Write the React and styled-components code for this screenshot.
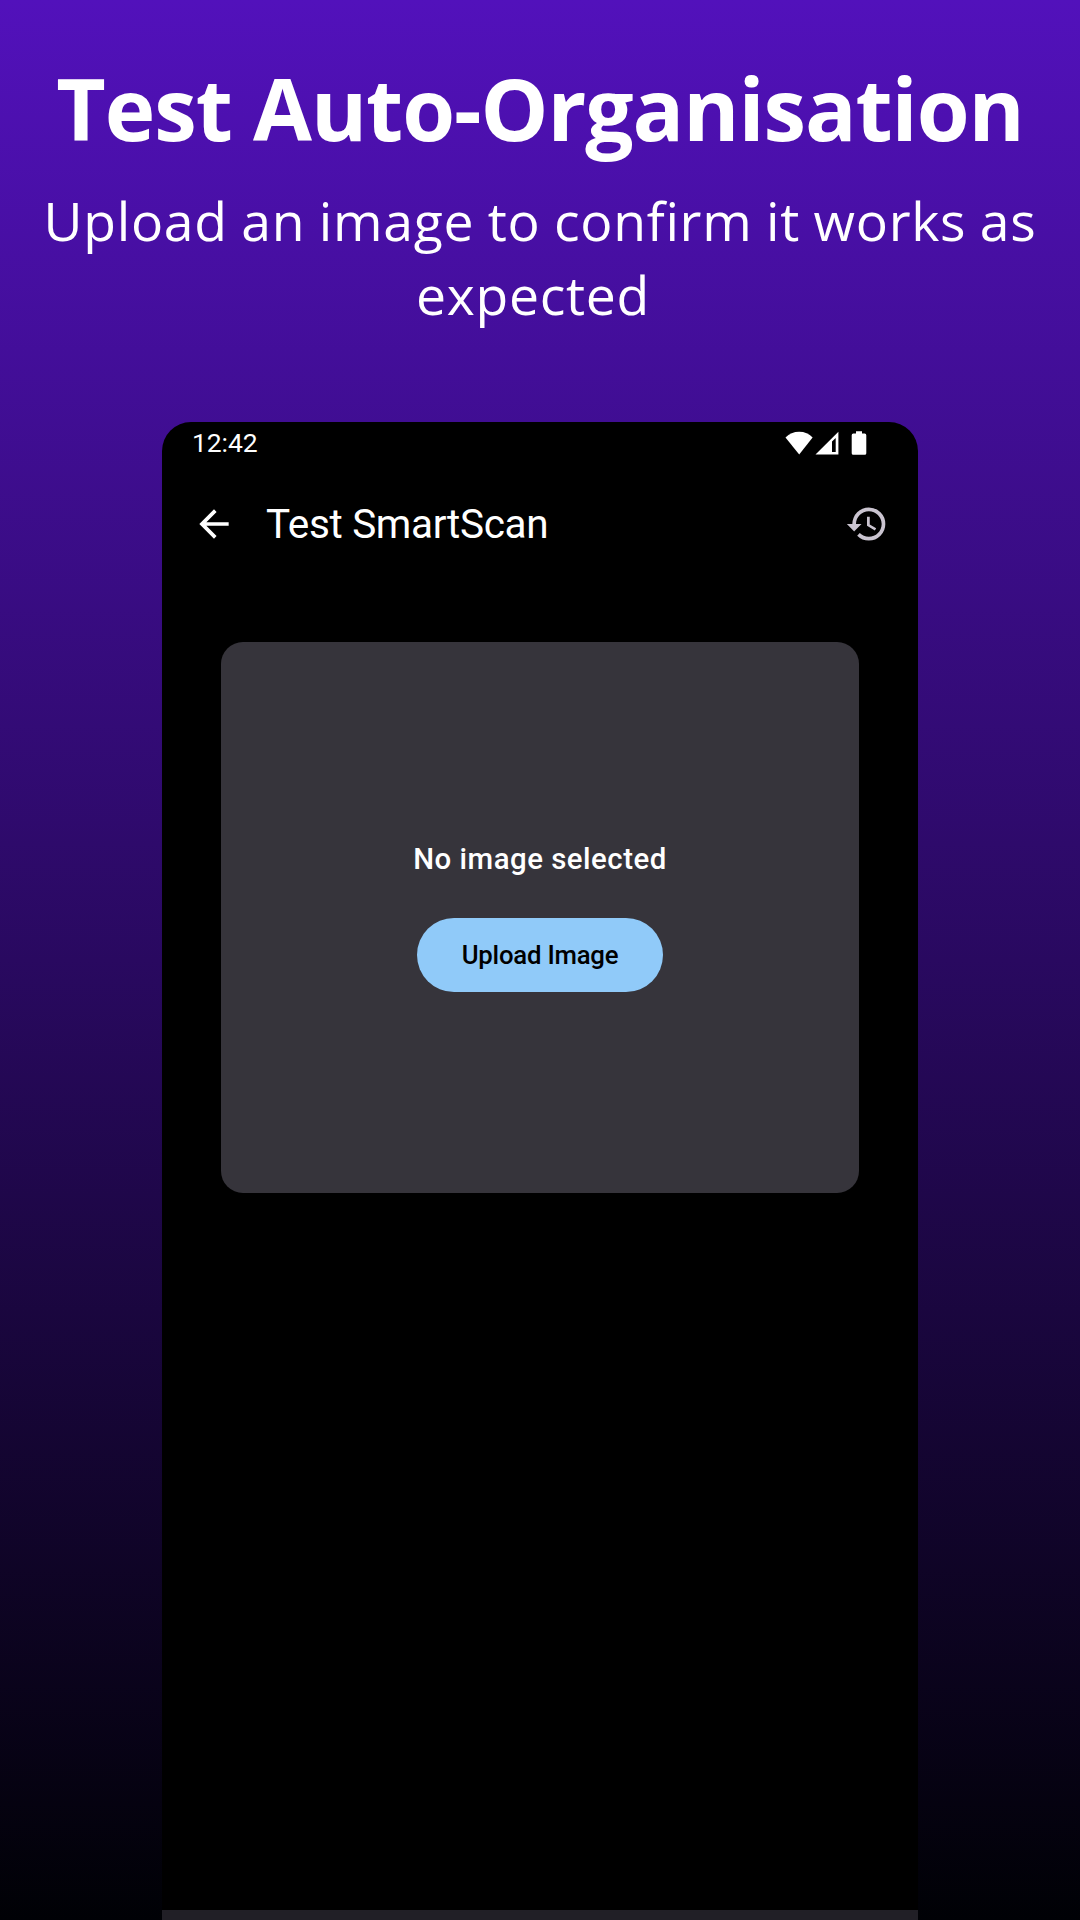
import React from "react";
import styled, { createGlobalStyle } from "styled-components";

const GlobalStyle = createGlobalStyle`
  *, *::before, *::after { box-sizing: border-box; }
  html, body { margin: 0; padding: 0; background: #000; }
`;

const Page = styled.main`
  display: flex;
  flex-direction: column;
  align-items: center;
  width: 1080px;
  height: 1920px;
  overflow: hidden;
  background: linear-gradient(180deg, #5211bb 0%, #000105 100%);
  color: #fff;
`;

const Header = styled.header`
  display: flex;
  flex-direction: column;
  align-items: center;
  width: 100%;
  height: 422px;
  padding-top: 50px;
  flex: none;
  font-family: "Open Sans", "Noto Sans", sans-serif;
  text-align: center;
  white-space: nowrap;
`;

const Headline = styled.h1`
  margin: 0;
  font-size: 85.5px;
  line-height: 116px;
  font-weight: 700;
  letter-spacing: -1.03px;
`;

const Tagline = styled.p`
  margin: 18px 0 0;
  font-size: 53.5px;
  line-height: 74px;
  font-weight: 400;
  letter-spacing: 0.7px;
  word-spacing: -1px;
`;

const TaglineRow = styled.span`
  display: block;
  padding-right: ${(p) => p.$trail || 0}px;
`;

const Phone = styled.section`
  display: flex;
  flex-direction: column;
  width: 756px;
  height: 1498px;
  flex: none;
  background: #000;
  border-radius: 29px 29px 0 0;
  overflow: hidden;
  font-family: Roboto, "Noto Sans", sans-serif;
`;

const StatusBar = styled.div`
  display: flex;
  align-items: center;
  justify-content: space-between;
  height: 42px;
  padding: 0 51px 0 30px;
`;

const Clock = styled.span`
  font-size: 26.5px;
  line-height: 42px;
  letter-spacing: -0.1px;
`;

const StatusIcons = styled.div`
  display: flex;
  align-items: center;
  svg { display: block; }
`;

const Connectivity = styled.div`
  display: flex;
  gap: 2px;
  margin-right: 12px;
`;

const AppBar = styled.div`
  display: flex;
  align-items: center;
  height: 118px;
  padding: 2px 29px 0 30px;
`;

const Title = styled.h2`
  flex: 1;
  margin: 0 0 0 30px;
  font-size: 40.5px;
  line-height: 52px;
  font-weight: 400;
  letter-spacing: -0.35px;
`;

const IconButton = styled.button`
  display: flex;
  padding: 0;
  border: 0;
  background: none;
  color: ${(p) => p.$color};
  svg { display: block; }
`;

const Content = styled.div`
  flex: 1;
  padding: 60px 59px 0;
`;

const Card = styled.div`
  display: flex;
  flex-direction: column;
  align-items: center;
  justify-content: center;
  height: 551px;
  padding-bottom: 6px;
  border-radius: 22px;
  background: #36343b;
`;

const EmptyLabel = styled.p`
  margin: 0;
  font-size: 29.4px;
  line-height: 44px;
  font-weight: 500;
  letter-spacing: 0.5px;
`;

const UploadButton = styled.button`
  width: 246px;
  height: 74px;
  margin-top: 37px;
  padding: 0;
  border: 0;
  border-radius: 37px;
  background: #90caf9;
  color: #000;
  font: 500 25.75px/37px Roboto, "Noto Sans", sans-serif;
  letter-spacing: -0.22px;
`;

const BottomBar = styled.div`
  height: 10px;
  background: #211f26;
`;

const WifiIcon = () => (
  <svg width="28" height="24" viewBox="0 0 28 24" fill="currentColor">
    <path d="M0.500 6.400C4.100 2.600 8.900.7 14.200.7s10 1.900 13.400 5.700L14.200 23.500z" />
  </svg>
);

const SignalIcon = () => (
  <svg width="24" height="24" viewBox="0 0 24 24">
    <path fill="currentColor" fillRule="evenodd" d="M23.400.7V23.600H.5zM20.700 6.900 17 10.500V20.900H20.700z" />
  </svg>
);

const BatteryIcon = () => (
  <svg width="16" height="24" viewBox="0 0 16 24" fill="currentColor">
    <path d="M5 .3h6v2.300h2.700q1.600 0 1.600 1.600v18q0 1.500-1.600 1.500H2.300Q.7 23.700.7 22.200v-18q0-1.600 1.600-1.600H5z" />
  </svg>
);

const BackIcon = () => (
  <svg width="44" height="44" viewBox="0 0 24 24" fill="currentColor">
    <path d="M20 11H7.830l5.590-5.590L12 4l-8 8 8 8 1.410-1.410L7.830 13H20v-2z" />
  </svg>
);

const HistoryIcon = () => (
  <svg width="44" height="44" viewBox="0 0 24 24" fill="currentColor">
    <path d="M13 3a9 9 0 0 0-9 9H1l3.890 3.890.07.14L9 12H6c0-3.870 3.130-7 7-7s7 3.130 7 7-3.130 7-7 7c-1.930 0-3.680-.79-4.940-2.060l-1.420 1.420A8.954 8.954 0 0 0 13 21a9 9 0 0 0 0-18zm-1 5v5l4.280 2.540.72-1.210-3.500-2.080V8H12z" />
  </svg>
);

export default function App() {
  return (
    <>
      <GlobalStyle />
      <Page>
        <Header>
          <Headline>Test Auto-Organisation</Headline>
          <Tagline>
            <TaglineRow>Upload an image to confirm it works as</TaglineRow>
            <TaglineRow $trail={14}>expected</TaglineRow>
          </Tagline>
        </Header>
        <Phone>
          <StatusBar>
            <Clock>12:42</Clock>
            <StatusIcons>
              <Connectivity>
                <WifiIcon />
                <SignalIcon />
              </Connectivity>
              <BatteryIcon />
            </StatusIcons>
          </StatusBar>
          <AppBar>
            <IconButton $color="#fff" aria-label="Back">
              <BackIcon />
            </IconButton>
            <Title>Test SmartScan</Title>
            <IconButton $color="#cac4d0" aria-label="History">
              <HistoryIcon />
            </IconButton>
          </AppBar>
          <Content>
            <Card>
              <EmptyLabel>No image selected</EmptyLabel>
              <UploadButton>Upload Image</UploadButton>
            </Card>
          </Content>
          <BottomBar />
        </Phone>
      </Page>
    </>
  );
}
